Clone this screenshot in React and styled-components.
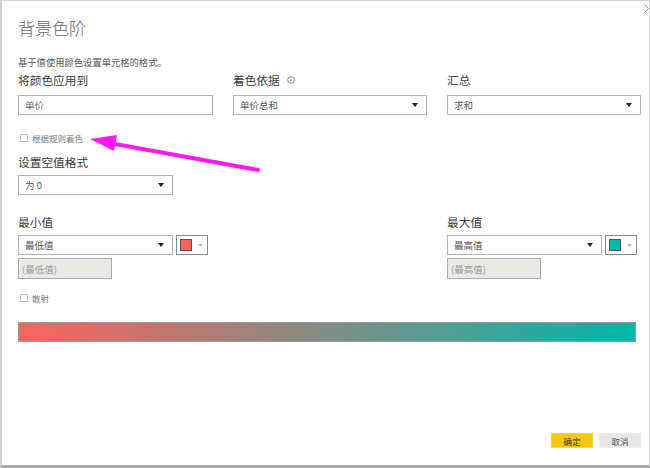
import styled, {createGlobalStyle} from 'styled-components'

const GlobalStyle = createGlobalStyle`
  body {
    margin: 0;
    background: #fff;
    font-family: "Noto Sans CJK SC", "Noto Sans", sans-serif;
  }
`

const Caret = () => (
  <svg width="6" height="4" viewBox="0 0 6 4"><path d="M0 0h6L3 4z" fill="#222" /></svg>
)

const ColorPick = ({color}) => (
  <SwatchBox>
    <Swatch color={color} />
    <svg width="5" height="3" viewBox="0 0 5 3"><path d="M0 0h5L2.5 3z" fill="#bbb" /></svg>
  </SwatchBox>
)

const App = () => {
  return (
    <>
      <GlobalStyle />
      <Dialog>
        <CloseX width="9" height="9" viewBox="0 0 9 9">
          <path d="M0.5 0.5l8 8M8.5 0.5l-8 8" stroke="#999" strokeWidth="1" />
        </CloseX>
        <Title>背景色阶</Title>
        <Desc>基于值使用颜色设置单元格的格式。</Desc>
        <Columns>
          <Field>
            <Label>将颜色应用到</Label>
            <TextBox>单价</TextBox>
          </Field>
          <Field>
            <Label>
              着色依据
              <svg width="8" height="8" viewBox="0 0 8 8">
                <circle cx="4" cy="4" r="3.3" fill="none" stroke="#777" strokeWidth="0.8" />
                <path d="M4 3.4v2.4M4 2.2v.6" stroke="#777" strokeWidth="0.8" />
              </svg>
            </Label>
            <SelectBox>单价总和<Caret /></SelectBox>
          </Field>
          <Field>
            <Label>汇总</Label>
            <SelectBox>求和<Caret /></SelectBox>
          </Field>
        </Columns>
        <CheckRow top={17}>
          <CheckBox />
          根据规则着色
        </CheckRow>
        <Label top={10}>设置空值格式</Label>
        <SelectBox top={5} width={155}>为 0<Caret /></SelectBox>
        <Columns top={19}>
          <Field>
            <Label>最小值</Label>
            <PickRow>
              <SelectBox width={155}>最低值<Caret /></SelectBox>
              <ColorPick color="#fd625e" />
            </PickRow>
            <Disabled>(最低值)</Disabled>
          </Field>
          <div />
          <Field>
            <Label>最大值</Label>
            <PickRow>
              <SelectBox width={155}>最高值<Caret /></SelectBox>
              <ColorPick color="#01b8aa" />
            </PickRow>
            <Disabled>(最高值)</Disabled>
          </Field>
        </Columns>
        <CheckRow top={13}>
          <CheckBox />
          散射
        </CheckRow>
        <GradientBar />
        <Footer>
          <Button primary>确定</Button>
          <Button>取消</Button>
        </Footer>
        <Pointer width="180" height="40" viewBox="0 0 180 40">
          <path d="M174 35L20 7" stroke="#ff19f0" strokeWidth="4" strokeLinecap="round" />
          <path d="M6 4L33 0L30 16z" fill="#ff19f0" />
        </Pointer>
      </Dialog>
    </>
  )
}

const Dialog = styled.div`
  position: relative;
  width: 650px;
  height: 468px;
  box-sizing: border-box;
  border: 1px solid #d4d4d4;
  border-left: 2px solid #cfcfcf;
  border-bottom: 3px solid #a8a8a8;
  padding: 0 8px 0 16px;
  display: flex;
  flex-direction: column;
  overflow: hidden;
`
const CloseX = styled.svg`
  position: absolute;
  top: 3px;
  right: -4px;
`
const Title = styled.div`
  margin-top: 16px;
  font-size: 17px;
  line-height: 22px;
  color: #6a6a6a;
  font-weight: 300;
`
const Desc = styled.div`
  margin-top: 16px;
  font-size: 9.3px;
  line-height: 14px;
  color: #555;
`
const Columns = styled.div`
  display: grid;
  grid-template-columns: 195px 194px 194px;
  column-gap: 20px;
  margin-top: ${p => p.top ?? 3}px;
`
const Field = styled.div`
  display: flex;
  flex-direction: column;
`
const Label = styled.div`
  display: flex;
  align-items: center;
  gap: 7px;
  margin-top: ${p => p.top ?? 0}px;
  font-size: 11.7px;
  line-height: 16px;
  color: #3a3a3a;
`
const inputBase = `
  box-sizing: border-box;
  height: 20px;
  display: flex;
  align-items: center;
  padding: 0 8px 0 6px;
  font-size: 9.5px;
  border: 1px solid #b3b3b3;
  background: #fff;
`
const TextBox = styled.div`
  ${inputBase}
  margin-top: 7px;
  color: #666;
`
const SelectBox = styled.div`
  ${inputBase}
  justify-content: space-between;
  margin-top: ${p => p.top ?? 0}px;
  width: ${p => (p.width ? `${p.width}px` : 'auto')};
  color: #555;
  ${Field} > & {
    margin-top: 7px;
  }
`
const PickRow = styled.div`
  display: flex;
  gap: 3px;
  margin-top: 5px;
`
const SwatchBox = styled.div`
  box-sizing: border-box;
  width: 32px;
  height: 20px;
  border: 1px solid #8a8a8a;
  display: flex;
  align-items: center;
  gap: 6px;
  padding-left: 3px;
`
const Swatch = styled.div`
  width: 12px;
  height: 12px;
  box-sizing: border-box;
  border: 1px solid #555;
  background: ${p => p.color};
`
const Disabled = styled.div`
  ${inputBase}
  margin-top: 3px;
  width: 94px;
  height: 21px;
  padding-left: 3px;
  background: #ebe9e3;
  border-color: #a9a9a9;
  color: #9a9a9a;
`
const CheckRow = styled.div`
  display: flex;
  align-items: center;
  gap: 4px;
  margin-top: ${p => p.top}px;
  padding-left: 2px;
  font-size: 8.5px;
  line-height: 12px;
  color: #7a7a7a;
`
const CheckBox = styled.span`
  box-sizing: border-box;
  width: 8px;
  height: 8px;
  border: 1px solid #bdbdbd;
`
const GradientBar = styled.div`
  margin-top: 18px;
  width: 618px;
  height: 20px;
  box-sizing: border-box;
  border: 1px solid #9a9a9a;
  background: linear-gradient(to right, #fd625e, #01b8aa);
`
const Footer = styled.div`
  margin-top: auto;
  margin-bottom: 17px;
  display: flex;
  justify-content: flex-end;
  gap: 6px;
`
const Button = styled.div`
  width: 42px;
  height: 15px;
  box-sizing: border-box;
  display: flex;
  align-items: center;
  justify-content: center;
  font-size: 8.5px;
  color: ${p => (p.primary ? '#3a3a3a' : '#555')};
  background: ${p => (p.primary ? '#f2c811' : '#e6e6e6')};
  border: 1px solid ${p => (p.primary ? '#f5d445' : '#ececec')};
`
const Pointer = styled.svg`
  position: absolute;
  left: 82px;
  top: 134px;
  overflow: visible;
`

export default App
